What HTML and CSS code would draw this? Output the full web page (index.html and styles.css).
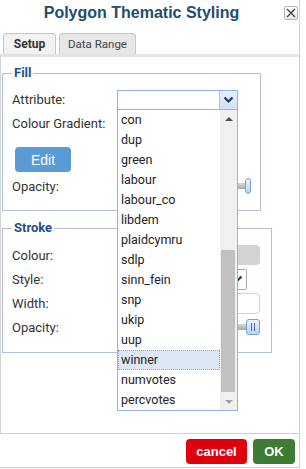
FILE: index.html
```html
<!DOCTYPE html>
<html lang="en">
<head>
    <meta charset="UTF-8">
    <title>Polygon Thematic Styling</title>
    <link rel="stylesheet" href="styles.css">
</head>
<body>
    <div class="dialog">
        <div class="titlebar">
            <h1>Polygon Thematic Styling</h1>
            <button class="close-btn" title="Close">
                <svg width="10" height="10" viewBox="0 0 10 10"><path d="M1 1L9 9M9 1L1 9" stroke="#444" stroke-width="1.3"/></svg>
            </button>
        </div>

        <div class="tabs">
            <div class="tab tab-active">Setup</div>
            <div class="tab tab-range">Data Range</div>
        </div>

        <div class="panel">
            <fieldset class="group group-fill">
                <legend>Fill</legend>
                <div class="row">
                    <label>Attribute:</label>
                    <div class="select select-focus">
                        <span class="select-arrow">
                            <svg width="11" height="8" viewBox="0 0 11 8"><path d="M1.5 1.5L5.5 5.5L9.5 1.5" fill="none" stroke="#1b3b78" stroke-width="2.2"/></svg>
                        </span>
                    </div>
                </div>
                <div class="row">
                    <label>Colour Gradient:</label>
                </div>
                <div class="row row-btn">
                    <button class="edit-btn">Edit</button>
                </div>
                <div class="row row-last">
                    <label>Opacity:</label>
                    <div class="slider slider-fill"><span class="handle handle-small"></span></div>
                </div>
            </fieldset>

            <fieldset class="group group-stroke">
                <legend>Stroke</legend>
                <div class="row">
                    <label>Colour:</label>
                    <div class="swatch"></div>
                </div>
                <div class="row">
                    <label>Style:</label>
                    <div class="select select-style">
                        <span class="select-arrow plain">
                            <svg width="11" height="8" viewBox="0 0 11 8"><path d="M1.5 1.5L5.5 5.5L9.5 1.5" fill="none" stroke="#1b3b78" stroke-width="2.2"/></svg>
                        </span>
                    </div>
                </div>
                <div class="row">
                    <label>Width:</label>
                    <div class="text-input"></div>
                </div>
                <div class="row">
                    <label>Opacity:</label>
                    <div class="slider slider-stroke"><span class="handle"></span></div>
                </div>
            </fieldset>
        </div>

        <div class="footer">
            <button class="btn btn-cancel">cancel</button>
            <button class="btn btn-ok">OK</button>
        </div>

        <!-- open attribute list, drawn over the form -->
        <div class="dropdown">
            <ul class="options">
                <li>con</li>
                <li>dup</li>
                <li>green</li>
                <li>labour</li>
                <li>labour_co</li>
                <li>libdem</li>
                <li>plaidcymru</li>
                <li>sdlp</li>
                <li>sinn_fein</li>
                <li>snp</li>
                <li>ukip</li>
                <li>uup</li>
                <li class="hover">winner</li>
                <li>numvotes</li>
                <li>percvotes</li>
            </ul>
            <div class="scrollbar">
                <span class="scroll-btn"><span class="tri-up"></span></span>
                <div class="scroll-track"><div class="scroll-thumb"></div></div>
                <span class="scroll-btn"><span class="tri-down"></span></span>
            </div>
        </div>
    </div>
</body>
</html>
```

FILE: styles.css
```css
body {
    margin: 0;
    padding: 0;
    background-color: #ffffff;
    font-family: Roboto, "Liberation Sans", Arial, sans-serif;
    color: #333;
}
.dialog {
    position: relative;
    width: 299px;
    height: 467px;
    border-right: 1px solid #cfcfcf;
    border-bottom: 1px solid #cfcfcf;
    display: flex;
    flex-direction: column;
    background-color: #ffffff;
}
.titlebar {
    position: relative;
    height: 33px;
    padding-right: 16px;
}
h1 {
    margin: 0;
    text-align: center;
    font-family: "Liberation Sans", Arial, sans-serif;
    font-size: 16px;
    line-height: 26px;
    font-weight: bold;
    color: #1e4d6d;
}
.close-btn {
    position: absolute;
    top: 6px;
    right: 1px;
    width: 14px;
    height: 14px;
    padding: 0;
    border: 1px solid #b4b4b4;
    border-radius: 2px;
    background: linear-gradient(#ffffff, #ececec);
    display: flex;
    align-items: center;
    justify-content: center;
}
.tabs {
    display: flex;
    gap: 3px;
    padding-left: 3px;
    height: 21px;
}
.tab {
    box-sizing: border-box;
    height: 21px;
    border: 1px solid #c6c6c6;
    border-bottom: none;
    border-radius: 4px 4px 0 0;
    background-color: #e7e7e7;
    font-size: 11.5px;
    line-height: 20px;
    text-align center;
    text-align: center;
    color: #444;
}
.tab-active {
    width: 53px;
    background-color: #f2f2f2;
    font-weight: bold;
    font-size: 12px;
    color: #333;
}
.tab-range {
    width: 77px;
}
.panel {
    flex: 1;
    border-top: 3px solid #e3e3e3;
    border-left: 1px solid #d4d4d4;
}
.group {
    margin: 8px 0 0 1px;
    padding: 0 9px 12px;
    border: 1px solid #b6bdd6;
    min-width: 0;
    box-sizing: border-box;
}
.group legend {
    padding: 0 2px;
    font-size: 13px;
    line-height: 16px;
    font-weight: bold;
    color: #1f4f8e;
}
.group-fill {
    width: 259px;
    padding-top: 6px;
}
.group-stroke {
    width: 270px;
    margin-top: 9px;
    padding-top: 7px;
    padding-bottom: 13px;
}
.row {
    display: flex;
    align-items: center;
    height: 24px;
}
.row label {
    width: 105px;
    flex-shrink: 0;
    font-size: 13px;
    color: #333;
}
.row-btn {
    height: 25px;
    margin-top: 12px;
}
.row-last {
    margin-top: 2px;
}
.select {
    position: relative;
    box-sizing: border-box;
    width: 121px;
    height: 20px;
    margin-top: 2px;
    border: 1px solid #8fb2e3;
    background-color: #ffffff;
}
.select-arrow {
    position: absolute;
    top: 0;
    right: 0;
    bottom: 0;
    width: 17px;
    border-left: 1px solid #a9c3ea;
    background: linear-gradient(#e6eefa, #d3e1f5);
    display: flex;
    align-items: center;
    justify-content: center;
}
.select-style {
    width: 130px;
    height: 21px;
    margin-top: 0;
    border: 1px solid #a9a9a9;
    border-radius: 2px;
}
.select-arrow.plain {
    border-left: none;
    background: #ffffff;
}
.edit-btn {
    margin-left: 3px;
    width: 56px;
    height: 25px;
    border: none;
    border-radius: 4px;
    background-color: #5b9bd5;
    color: #ffffff;
    font-family: "Liberation Sans", Arial, sans-serif;
    font-size: 14px;
    padding: 0;
}
.slider {
    position: relative;
    height: 6px;
    border-radius: 3px;
    background: linear-gradient(#d8d8d8, #a9a9a9);
}
.slider-fill {
    width: 134px;
}
.slider-stroke {
    width: 143px;
}
.handle {
    position: absolute;
    right: 0;
    top: -5px;
    width: 12px;
    height: 14px;
    border: 1px solid #79a1d9;
    border-radius: 3px;
    background: linear-gradient(#eef4fd, #bcd3f3);
}
.handle::after {
    content: "";
    position: absolute;
    left: 4px;
    top: 3px;
    width: 2px;
    height: 8px;
    border-left: 1px solid #3c6cb4;
    border-right: 1px solid #3c6cb4;
}
.handle-small {
    width: 4px;
    top: -5px;
    right: 0;
    border-radius: 4px;
}
.handle-small::after {
    display: none;
}
.swatch {
    width: 143px;
    height: 20px;
    border-radius: 4px;
    background-color: #d3d3d3;
}
.text-input {
    box-sizing: border-box;
    width: 143px;
    height: 21px;
    border: 1px solid #d2d2d2;
    border-radius: 4px;
}
.footer {
    height: 34px;
    box-sizing: border-box;
    border-top: 1px solid #cfcfcf;
    padding: 5px 4px 0 0;
    display: flex;
    justify-content: flex-end;
    gap: 6px;
}
.btn {
    height: 25px;
    border: none;
    border-radius: 4px;
    padding: 0;
    color: #ffffff;
    font-family: "Liberation Sans", Arial, sans-serif;
    font-size: 13px;
    font-weight: bold;
}
.btn-cancel {
    width: 61px;
    background-color: #e0000d;
}
.btn-ok {
    width: 42px;
    background-color: #3e7c34;
}
.dropdown {
    position: absolute;
    left: 117px;
    top: 109px;
    width: 121px;
    height: 302px;
    box-sizing: border-box;
    border: 1px solid #92b5e6;
    background-color: #ffffff;
    display: flex;
}
.options {
    list-style: none;
    margin: 0;
    padding: 0;
    flex: 1;
}
.options li {
    box-sizing: border-box;
    height: 20px;
    line-height: 20px;
    padding-left: 3px;
    font-size: 12.5px;
    color: #222;
}
.options li.hover {
    background-color: #dee7f6;
    outline: 1px dotted #7fa3da;
    outline-offset: -1px;
}
.scrollbar {
    width: 17px;
    background-color: #f0f0f0;
    display: flex;
    flex-direction: column;
}
.scroll-btn {
    height: 17px;
    display: flex;
    align-items: center;
    justify-content: center;
}
.tri-up {
    width: 0;
    height: 0;
    border-left: 4px solid transparent;
    border-right: 4px solid transparent;
    border-bottom: 4px solid #505050;
}
.tri-down {
    width: 0;
    height: 0;
    border-left: 4px solid transparent;
    border-right: 4px solid transparent;
    border-top: 4px solid #a3a3a3;
}
.scroll-track {
    flex: 1;
    padding-top: 123px;
}
.scroll-thumb {
    margin: 0 2px 0 1px;
    height: 142px;
    background-color: #c1c1c1;
}
```
